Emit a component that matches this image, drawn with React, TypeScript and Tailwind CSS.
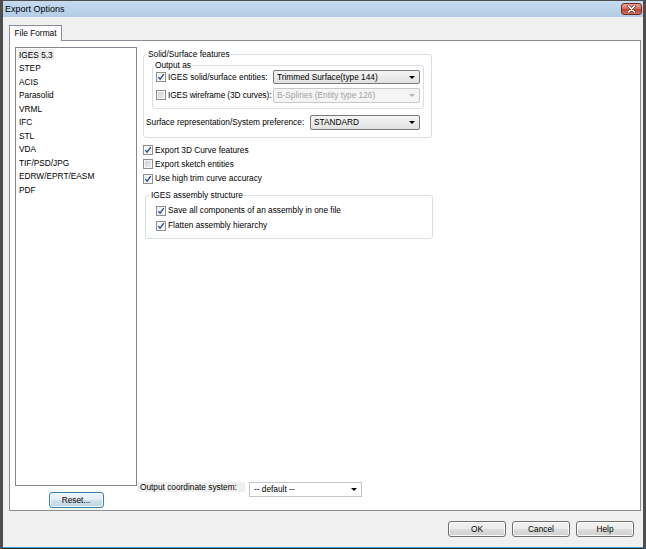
import React from "react";

function Check({ checked }: { checked: boolean }) {
  return (
    <span className="flex h-[10px] w-[10px] shrink-0 items-center justify-center border border-[#8e8f8f] bg-[#f6f6f6]">
      {checked ? (
        <svg width="8" height="8" viewBox="0 0 8 8">
          <path d="M1.3 4.1 L3.1 6.2 L6.8 1.2" fill="none" stroke="#2b4a8a" strokeWidth="1.4" />
        </svg>
      ) : (
        <span className="h-[6px] w-[6px] bg-linear-to-br from-[#cfd1d4] to-[#eeeeee]" />
      )}
    </span>
  );
}

function Arrow({ color }: { color: string }) {
  return (
    <svg width="6" height="3" viewBox="0 0 6 3" className="shrink-0">
      <path d="M0 0H6L3 3Z" fill={color} />
    </svg>
  );
}

function Combo({
  text,
  kind,
  className,
}: {
  text: string;
  kind: "ro" | "dis" | "edit";
  className: string;
}) {
  if (kind === "ro") {
    return (
      <div
        className={`flex shrink-0 items-center justify-between rounded-[2px] border border-[#7a7a7a] bg-linear-to-b from-[#f5f5f5] to-[#e1e1e1] pl-[3px] pr-[4px] text-black ${className}`}
      >
        <span className="whitespace-nowrap">{text}</span>
        <Arrow color="#000" />
      </div>
    );
  }
  if (kind === "dis") {
    return (
      <div
        className={`flex shrink-0 items-center justify-between rounded-[2px] border border-[#c8c8c8] bg-[#f4f4f4] pl-[3px] pr-[4px] text-[#a3a3a3] ${className}`}
      >
        <span className="whitespace-nowrap">{text}</span>
        <Arrow color="#b5b5b5" />
      </div>
    );
  }
  return (
    <div
      className={`flex shrink-0 items-center justify-between border border-[#c4c6cb] bg-white pl-[4px] pr-[4px] text-black ${className}`}
    >
      <span className="whitespace-nowrap">{text}</span>
      <Arrow color="#000" />
    </div>
  );
}

function CheckRow({
  checked,
  label,
  className,
  labelClass = "",
}: {
  checked: boolean;
  label: string;
  className: string;
  labelClass?: string;
}) {
  return (
    <div className={`flex min-w-0 items-center gap-[2px] ${className}`}>
      <Check checked={checked} />
      <span className={`whitespace-nowrap ${labelClass}`}>{label}</span>
    </div>
  );
}

const formats = [
  "IGES 5.3",
  "STEP",
  "ACIS",
  "Parasolid",
  "VRML",
  "IFC",
  "STL",
  "VDA",
  "TIF/PSD/JPG",
  "EDRW/EPRT/EASM",
  "PDF",
];

const btn =
  "flex h-[16px] w-[58px] items-center justify-center rounded-[3px] border border-[#707070] bg-[linear-gradient(#f2f2f2_0%,#ebebeb_49%,#dddddd_51%,#cfcfcf_100%)] shadow-[inset_0_0_0_1px_#fbfbfb] text-black";

export default function App() {
  return (
    <div className="flex h-[549px] w-[646px] flex-col overflow-hidden border-x-[3px] border-t border-[#4e4e4e] bg-[#f0f0f0] font-['Liberation_Sans',Arial,sans-serif] text-[8.3px] leading-none text-black">
      {/* Title bar */}
      <div className="flex h-[16px] shrink-0 items-center justify-between bg-linear-to-b from-[#c6dbef] to-[#b4cce6] pl-[2px] pr-[1px]">
        <span className="text-[9px]">Export Options</span>
        <div className="flex h-[12px] w-[21px] items-center justify-center rounded-[3px] border border-[#6e2a20] bg-[linear-gradient(#e9a99c_0%,#d66f5c_45%,#c4432e_55%,#d2735f_100%)]">
          <svg width="9" height="8" viewBox="0 0 9 8">
            <path d="M1.5 1 L7.5 7 M7.5 1 L1.5 7" stroke="#7a3328" strokeWidth="3" strokeLinecap="round" />
            <path d="M1.5 1 L7.5 7 M7.5 1 L1.5 7" stroke="#ffffff" strokeWidth="1.6" strokeLinecap="round" />
          </svg>
        </div>
      </div>

      {/* Body */}
      <div className="flex flex-1 flex-col pl-[6px] pr-[2px] pt-[8px]">
        <div className="relative z-10 -mb-px flex h-[16px] w-[53px] items-center justify-center border border-b-0 border-[#898c95] bg-white">
          File Format
        </div>
        <div className="flex h-[471px] border border-[#898c95] bg-white">
          {/* Left column */}
          <div className="flex flex-col items-center pl-[5px] pt-[6px]">
            <div className="flex h-[439px] w-[122px] flex-col border border-[#828790] bg-white">
              {formats.map((f, i) => (
                <div key={f} className="flex h-[13.5px] items-center pl-[2px]">
                  <span
                    className={`flex h-[11px] items-center px-[1px] ${i === 0 ? "bg-[#ededed]" : ""}`}
                  >
                    {f}
                  </span>
                </div>
              ))}
            </div>
            <button className="mt-[6px] flex h-[16px] w-[55px] items-center justify-center rounded-[3px] border border-[#3c7fb1] bg-[linear-gradient(#eef5fa_0%,#e2edf4_49%,#d0e1ed_51%,#bed5e6_100%)] shadow-[inset_0_0_0_1px_#f4f9fc] text-black">
              Reset...
            </button>
          </div>

          {/* Right column */}
          <div className="flex flex-1 flex-col">
            <div className="flex flex-col pl-[6px] pt-[8px]">
              {/* Solid/Surface features */}
              <fieldset className="w-[289px] min-w-0 rounded-[3px] border border-[#d5dfe5] pb-[7px]">
                <legend className="ml-[3px] px-[1px] leading-[10px]">Solid/Surface features</legend>
                <fieldset className="ml-[8px] mr-[7px] mt-[1px] min-w-0 rounded-[3px] border border-[#d5dfe5] pb-[6px]">
                  <legend className="ml-[1px] px-[1px] leading-[10px]">Output as</legend>
                  <div className="flex h-[14px] items-center pl-[3px] pr-[3px]">
                    <CheckRow checked label="IGES solid/surface entities:" className="flex-1" />
                    <Combo kind="ro" text="Trimmed Surface(type 144)" className="h-[14px] w-[147px]" />
                  </div>
                  <div className="mt-[4px] flex h-[14px] items-center pl-[3px] pr-[3px]">
                    <CheckRow
                      checked={false}
                      label="IGES wireframe (3D curves):"
                      className="flex-1"
                      labelClass="tracking-[-0.1px]"
                    />
                    <Combo kind="dis" text="B-Splines (Entity type 126)" className="h-[15px] w-[147px]" />
                  </div>
                </fieldset>
                <div className="mt-[6px] flex h-[15px] items-center pl-[2px] pr-[11px]">
                  <span className="whitespace-nowrap">Surface representation/System preference:</span>
                  <Combo kind="ro" text="STANDARD" className="ml-auto h-[15px] w-[110px]" />
                </div>
              </fieldset>

              <CheckRow checked label="Export 3D Curve features" className="mt-[5px] h-[14px]" />
              <CheckRow checked={false} label="Export sketch entities" className="h-[14px]" />
              <CheckRow checked label="Use high trim curve accuracy" className="h-[15px]" />

              {/* IGES assembly structure */}
              <fieldset className="ml-[2px] mt-[4px] w-[288px] min-w-0 rounded-[3px] border border-[#d5dfe5] pb-[5px] pl-[10px]">
                <legend className="-ml-[6px] px-[1px] leading-[10px]">IGES assembly structure</legend>
                <CheckRow checked label="Save all components of an assembly in one file" className="mt-[3px] h-[15px]" />
                <CheckRow checked label="Flatten assembly hierarchy" className="h-[15px]" />
              </fieldset>
            </div>

            {/* Output coordinate system */}
            <div className="mb-[13px] mt-auto flex items-start gap-[4px]">
              <div className="flex h-[10px] w-[108px] items-center bg-[#f0f0f0] pl-[3px]">
                <span className="whitespace-nowrap">Output coordinate system:</span>
              </div>
              <Combo kind="edit" text="-- default --" className="h-[15px] w-[113px]" />
            </div>
          </div>
        </div>

        {/* Buttons */}
        <div className="mt-[10px] flex justify-end gap-[6px] pr-[7px]">
          <button className={btn}>OK</button>
          <button className={btn}>Cancel</button>
          <button className={btn}>Help</button>
        </div>
      </div>
      <div className="h-px shrink-0 bg-[#3aa0d6]" />
      <div className="h-px shrink-0 bg-[#2a2a2a]" />
    </div>
  );
}
